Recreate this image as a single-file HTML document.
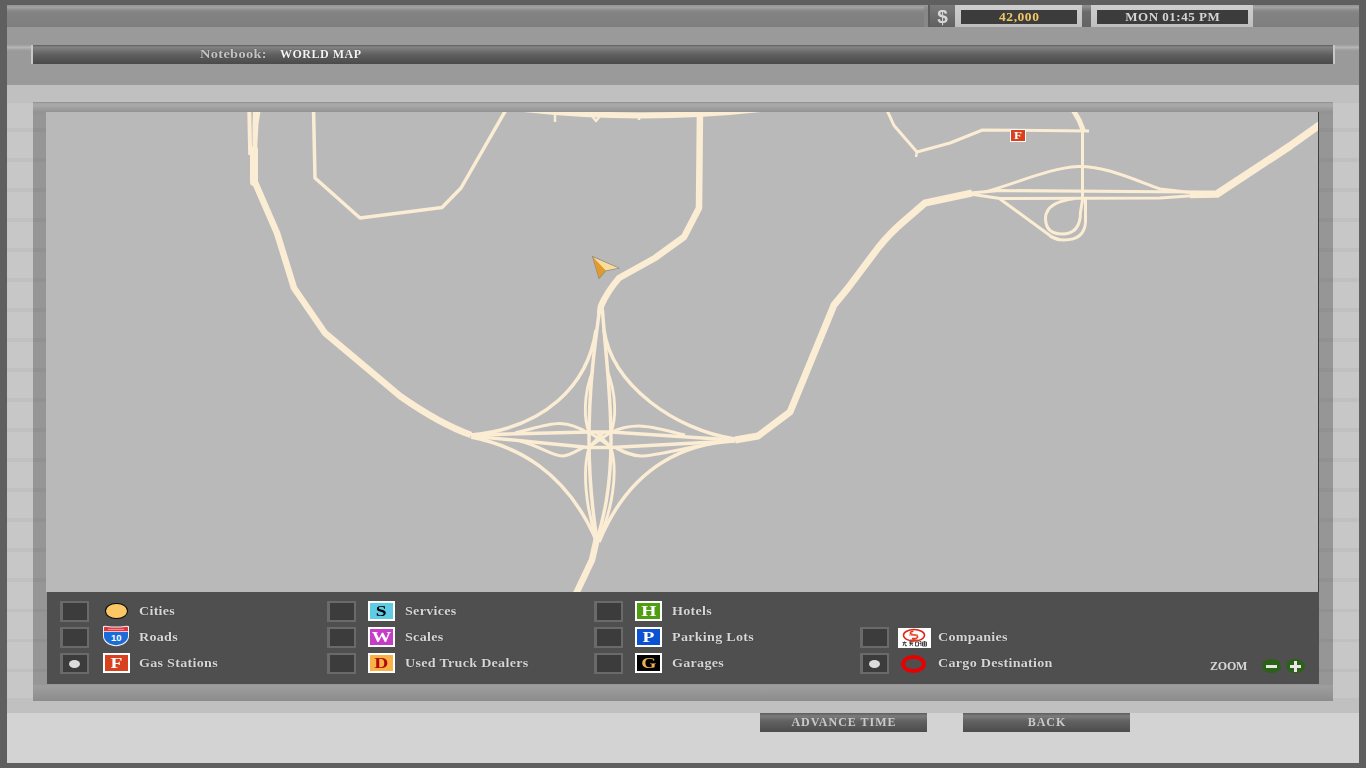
<!DOCTYPE html>
<html><head><meta charset="utf-8">
<style>
*{margin:0;padding:0;box-sizing:border-box}
html,body{width:1366px;height:768px;overflow:hidden;background:#5f5f5f;font-family:"Liberation Serif",serif;font-weight:bold}
.a{position:absolute}
#topbar{left:7px;top:5px;width:1352px;height:22px;background:linear-gradient(#959595 0,#a2a2a2 2.5px,#8a8a8a 5.5px,#828282 8px,#808080 20px,#7c7c7c 22px)}
#band{left:7px;top:27px;width:1352px;height:58px;background:#9a9a9a}
#light{left:7px;top:85px;width:1352px;height:628px;background:#c0c0c0}
.side{top:103px;width:26px;height:595px;background:#c7c7c7}
#stripes{left:7px;top:102px;width:1352px;height:596px;background:repeating-linear-gradient(180deg,rgba(0,0,0,0) 0,rgba(0,0,0,0) 26.5px,rgba(0,0,0,0.035) 26.5px,rgba(0,0,0,0.035) 30px)}
#bottom{left:7px;top:713px;width:1352px;height:50px;background:#d3d3d3}
#band2{left:7px;top:698px;width:1352px;height:15px;background:#c0c0c0}
#frame{left:33px;top:102px;width:1300px;height:599px;background:linear-gradient(#8c8c8c 0,#a5a5a5 1.5px,#a9a9a9 3.5px,#9c9c9c 7px,#939393 10px,#969696 14px,#969696 582px,#9e9e9e 584px,#8c8c8c 100%)}
#map{left:46px;top:112px;width:1272px;height:480px;background:#b9b9b9;overflow:hidden}
#mapline{left:1318px;top:112px;width:1px;height:480px;background:#404040}
#legend{left:47px;top:592px;width:1272px;height:92px;background:#4f4f4f}
.nbhl{top:45px;height:6px;background:linear-gradient(#a0a0a0 0,#b6b6b6 2.5px,#a2a2a2 4.5px,#9b9b9b 6px)}
#nb{left:33px;top:45px;width:1300px;height:19px;background:linear-gradient(#5c5c5c 0,#848484 2px,#7a7a7a 4px,#5e5e5e 10px,#4a4a4a 100%)}
.txt{white-space:nowrap;line-height:1;will-change:transform}
.cb{width:29px;height:21px;border:2px solid #6a6a6a;border-left-width:3px;border-bottom-width:2.5px;background:#3c3c3c}
.dot{left:6px;top:4.7px;width:11.2px;height:8.4px;border-radius:50%;background:#dcdcdc}
.lt{color:#d6d6d6;font-size:13px;letter-spacing:0.25px;text-shadow:0 0 1px #222;transform:scaleX(1.085);transform-origin:0 0}
.ic{width:27px;height:20px;border:2px solid #fff;border-left-width:2.5px;border-right-width:2.5px;font-size:15px;text-align:center;line-height:16.5px;font-weight:bold;will-change:transform}
.ic span{display:inline-block;transform:scaleX(1.3)}
.btn{top:713px;width:167px;height:19px;background:linear-gradient(#5c5c5c 0,#7c7c7c 3px,#626262 8px,#4c4c4c 100%);color:#cacaca;font-size:12px;text-align:center;line-height:19px;letter-spacing:1px;padding-left:1px}
</style></head><body>
<div class="a" id="topbar"></div>
<div class="a" id="band"></div>
<div class="a" id="light"></div>
<div class="a" id="band2"></div>
<div class="a" id="bottom"></div>

<!-- money / time -->
<div class="a" style="left:924px;top:5px;width:4px;height:22px;background:linear-gradient(#9a9a9a,#888 5px,#888)"></div>
<div class="a" style="left:928px;top:5px;width:2px;height:22px;background:#5c5c5c"></div>
<div class="a" style="left:930px;top:5px;width:25px;height:22px;background:linear-gradient(#7a7a7a,#606060);color:#d8d8d8;font-family:'Liberation Sans',sans-serif;font-size:19px;font-weight:bold;text-align:center;line-height:24px;will-change:transform">$</div>
<div class="a" style="left:955px;top:5px;width:127px;height:22px;background:linear-gradient(#cdcdcd,#c6c6c6 60%,#bebebe)"></div>
<div class="a txt" style="left:961px;top:10px;width:116px;height:14px;background:#3c3c3c;color:#f2c766;font-size:13.5px;text-align:center;line-height:14px;letter-spacing:0.55px;padding-left:0.55px">42,000</div>
<div class="a" style="left:1082px;top:5px;width:9px;height:22px;background:linear-gradient(#8e8e8e 0,#8a8a8a 2px,#6a6a6a 7px,#646464 100%)"></div>
<div class="a" style="left:1091px;top:5px;width:162px;height:22px;background:linear-gradient(#cdcdcd,#c6c6c6 60%,#bebebe)"></div>
<div class="a txt" style="left:1097px;top:10px;width:151px;height:14px;background:#3c3c3c;color:#d4d4d4;font-size:13px;text-align:center;line-height:14px;letter-spacing:0.5px;padding-left:0.5px">MON 01:45 PM</div>

<!-- notebook -->
<div class="a nbhl" style="left:7px;width:24px"></div>
<div class="a" style="left:31px;top:45px;width:2px;height:19px;background:#c8c8c8"></div>
<div class="a" id="nb"></div>
<div class="a" style="left:1333px;top:45px;width:2px;height:19px;background:#c8c8c8"></div>
<div class="a nbhl" style="left:1335px;width:24px"></div>
<div class="a txt" style="left:200px;top:48px;color:#c4c4c4;font-size:12.5px;letter-spacing:0.3px;transform:scaleX(1.15);transform-origin:0 0;text-shadow:0 0 1px #333">Notebook:</div>
<div class="a txt" style="left:280px;top:48px;color:#f4f4f4;font-size:12px;letter-spacing:0.5px;text-shadow:0 0 1px #333">WORLD MAP</div>

<div class="a side" style="left:7px"></div>
<div class="a side" style="left:1333px"></div>
<div class="a" id="frame"></div>
<div class="a" id="stripes"></div>
<div class="a" id="map">
<svg width="1272" height="480" viewBox="46 112 1272 480" style="display:block">
<g fill="none" stroke="#fbecd4" stroke-linejoin="round" stroke-linecap="butt">
<!-- road A -->
<path d="M249.2 108 L250.2 155" stroke-width="4"/>
<path d="M253 108 L261 108 L258.5 124 L257 152 L252.5 152 L252.5 124 Z" fill="#fbecd4" stroke="none"/>
<path d="M254 150 L254 182" stroke-width="8" stroke-linecap="round"/>
<path d="M254 180 L277 233 L294 288 L325 333 L400 396 Q440 424 471 435" stroke-width="6.5"/>
<!-- road B -->
<path d="M313.5 108 L315 178 L360 218 L442 207.5 L461 188 L507 108" stroke-width="3.5"/>
<!-- top arc -->
<path d="M515 108 Q640 123 770 108" stroke-width="6"/>
<path d="M555 114 L555 122 M639 114 L639 120 M592 116 L596 121 L600 116" stroke-width="2.5"/>
<!-- road C -->
<path d="M700 108 L699 208 L684 237 L655 258 L619 278 Q607 292 601 306 L600 314" stroke-width="6.5"/>
<!-- interchange verticals -->
<path d="M599.5 310 C594 350 589 390 589 440 C589 490 594 520 597 540" stroke-width="3.5"/>
<path d="M602.5 310 C605 350 611 390 611 440 C611 490 603 520 597 540" stroke-width="3.5"/>
<path d="M593 370 C583 395 584 420 589 432" stroke-width="2.9"/>
<path d="M607 370 C617 395 616 420 611 432" stroke-width="2.9"/>
<path d="M589 448 C582 470 586 510 597 540" stroke-width="2.9"/>
<path d="M611 448 C618 470 613 510 598 540" stroke-width="2.9"/>
<!-- X in center -->
<path d="M589 432 L611 447 M611 432 L589 447 M596 432 L611 447 M604 432 L589 447" stroke-width="2.9"/>
<!-- horizontals -->
<path d="M471 435 L589 432 L611 432 L733 440" stroke-width="3.5"/>
<path d="M471 436 L589 447.5 L611 447.5 L733 441" stroke-width="3.5"/>
<path d="M515 433 C535 428 550 423 560 423.5 C572 424 580 428 588 433" stroke-width="3.1"/>
<path d="M520 441 C540 446 552 456 562 456 C570 456 576 451 584 447" stroke-width="3.1"/>
<path d="M612 432 C620 428 628 426 639 426 C652 426 668 431 685 435" stroke-width="3.1"/>
<path d="M616 448 C624 452 632 456 641 456 C655 456 680 449 704 445" stroke-width="3.1"/>
<!-- ramps -->
<path d="M596 330 C588 385 545 428 471 435" stroke-width="3.5"/>
<path d="M604 330 C612 385 675 430 735 439" stroke-width="3.5"/>
<path d="M471 437 C516 446 566 470 597 542" stroke-width="3.5"/>
<path d="M735 441 C690 443 632 462 599 542" stroke-width="3.5"/>
<!-- bottom road -->
<path d="M597 538 L592 560 L574 598" stroke-width="6.5"/>
<!-- highway G -->
<path d="M735 440 L758 436 L790 412 L834 305 L848 288 L878 248 Q890 233 903 222 L925 203 L972 193" stroke-width="7"/>
<path d="M970 193 L1000 190.5 L1192 192 L1217 193" stroke-width="3"/>
<path d="M970 194 L1000 198.5 L1160 198 L1217 194" stroke-width="3"/>
<path d="M1190 194.5 L1217 194 L1290 146 L1325 121" stroke-width="7.5"/>
<path d="M985 192 C1020 182 1050 168 1078 166.5 C1105 166 1130 178 1160 189 L1195 193" stroke-width="3"/>
<path d="M1000 199 L1052 237 L1060 240" stroke-width="3"/>
<path d="M1082.5 131 L1082.5 200 L1080.5 212 Q1080.5 234 1062 234 Q1045.5 234 1045.5 218 Q1046 202 1075 198.5" stroke-width="3"/>
<path d="M1085.5 198 L1085.5 222 Q1084.5 240 1064 240 Q1056 240 1050 236" stroke-width="3"/>
<!-- road D -->
<path d="M886 108 L894 125.5 L917 152 L950 143 L982.5 130 L1089 131" stroke-width="3"/>
<path d="M917 151 L916 157" stroke-width="2.5"/>
<path d="M1072 108 L1079 120 L1083.5 131" stroke-width="5"/>
</g>
<!-- F icon -->
<rect x="1010" y="129" width="16" height="13" fill="#fff"/>
<rect x="1011" y="130" width="14" height="11" fill="#d8401e"/>
<text x="0" y="139.5" font-family="Liberation Serif" font-weight="bold" font-size="10" fill="#fff" text-anchor="middle" transform="translate(1018 0) scale(1.3 1)">F</text>
<!-- vehicle arrow -->
<g>
<path d="M592.8 256.9 L618.1 268.1 L605.6 270.6 L599.1 278.1 Z" fill="none" stroke="rgba(60,40,0,0.35)" stroke-width="1.2"/>
<path d="M592.8 256.9 L618.1 268.1 L605.6 270.6 Z" fill="#f9dc9c"/>
<path d="M592.8 256.9 L605.6 270.6 L599.1 278.1 Z" fill="#e29a2a"/>
</g>
</svg>

</div>
<div class="a" id="mapline"></div>
<div class="a" id="legend"></div>
<!-- checkboxes -->
<div class="a cb" style="left:60px;top:601px"></div>
<div class="a cb" style="left:60px;top:627px"></div>
<div class="a cb" style="left:60px;top:653px"><div class="a dot"></div></div>
<div class="a cb" style="left:327px;top:601px"></div>
<div class="a cb" style="left:327px;top:627px"></div>
<div class="a cb" style="left:327px;top:653px"></div>
<div class="a cb" style="left:594px;top:601px"></div>
<div class="a cb" style="left:594px;top:627px"></div>
<div class="a cb" style="left:594px;top:653px"></div>
<div class="a cb" style="left:860px;top:627px"></div>
<div class="a cb" style="left:860px;top:653px"><div class="a dot"></div></div>
<!-- icons -->
<div class="a" style="left:105px;top:602.8px;width:23px;height:16.6px;border-radius:50%;background:#fcc866;border:1.4px solid #080808"></div>
<svg class="a" style="left:102px;top:625px" width="28" height="22" viewBox="0 0 28 22">
<path d="M1 1.2 Q3 0.4 5 1 Q14 2.2 23 1 Q25 0.4 27 1.2 L27 11 C27 17 21 20.8 14 21.3 C7 20.8 1 17 1 11 Z" fill="#f4f4f4"/>
<path d="M2 2.2 Q3.5 1.6 5 2 Q14 3.2 23 2 Q24.5 1.6 26 2.2 L26 6.3 L2 6.3 Z" fill="#e23440"/>
<path d="M2 7 L26 7 L26 11 C26 16.3 20.5 19.6 14 20.2 C7.5 19.6 2 16.3 2 11 Z" fill="#1b6cd8"/>
<path d="M6 4.4 L22 4.4" stroke="#f3a0a8" stroke-width="0.9"/>
<text x="14.2" y="16.3" text-anchor="middle" font-family="Liberation Sans" font-weight="bold" font-size="9.5" fill="#fff">10</text>
</svg>
<div class="a ic" style="left:103px;top:653px;background:#d8401e;color:#fff"><span>F</span></div>
<div class="a ic" style="left:368px;top:601px;background:#5fcbe4;color:#000"><span>S</span></div>
<div class="a ic" style="left:368px;top:627px;background:#c63cc6;color:#fff"><span>W</span></div>
<div class="a ic" style="left:368px;top:653px;background:#f8b248;color:#b00a0a"><span>D</span></div>
<div class="a ic" style="left:635px;top:601px;background:#4f9e12;color:#fff"><span>H</span></div>
<div class="a ic" style="left:635px;top:627px;background:#0a52d2;color:#fff"><span>P</span></div>
<div class="a ic" style="left:635px;top:653px;background:#000;color:#e8b452"><span>G</span></div>
<svg class="a" style="left:898px;top:628px" width="33" height="20" viewBox="0 0 33 20">
<rect width="33" height="20" fill="#fff"/>
<ellipse cx="16" cy="7.3" rx="10.5" ry="5.7" fill="none" stroke="#e02414" stroke-width="1.5"/>
<path d="M15.5 3.2 Q12 3.5 12.5 5.5 Q13.5 7 17 7 Q20 7.5 19.5 9.3 Q18.5 11 14 10.5 M12 12.2 L20 12.2" fill="none" stroke="#e03a20" stroke-width="1.6"/>
<path d="M11 7 L20 7" stroke="#f07050" stroke-width="1"/>
<g fill="none" stroke="#3a3a3a" stroke-width="0.9">
<path d="M4.5 14.5 L8.5 14.5 M6.5 13.5 L5 18 M6.8 15 L7.5 18 L9 17.5"/>
<path d="M11 14 L15.5 14 M11.5 15.5 L15 15.5 M13 13 L12 18 M13.5 16 L15 18"/>
<path d="M17.5 14 L17.5 18 L20.5 18 L20.5 14 Z M21.5 13.5 L23 13.5 L23 18 M21.5 15.5 L23 15.5"/>
<path d="M24.5 14 L28.5 14 L28.5 18 L24.5 18 Z M24.5 16 L28.5 16 M26.5 13 L26.5 18"/>
</g>
</svg>
<div class="a" style="left:901px;top:655px;width:25px;height:18px;border-radius:50%;border:4px solid #e80000"></div>
<!-- labels -->
<div class="a txt lt" style="left:139px;top:604px">Cities</div>
<div class="a txt lt" style="left:139px;top:630px">Roads</div>
<div class="a txt lt" style="left:139px;top:656px">Gas Stations</div>
<div class="a txt lt" style="left:405.3px;top:604px">Services</div>
<div class="a txt lt" style="left:405.3px;top:630px">Scales</div>
<div class="a txt lt" style="left:405.3px;top:656px">Used Truck Dealers</div>
<div class="a txt lt" style="left:672.3px;top:604px">Hotels</div>
<div class="a txt lt" style="left:672.3px;top:630px">Parking Lots</div>
<div class="a txt lt" style="left:672.3px;top:656px">Garages</div>
<div class="a txt lt" style="left:938.3px;top:630px">Companies</div>
<div class="a txt lt" style="left:938.3px;top:656px">Cargo Destination</div>
<!-- zoom -->
<div class="a txt" style="left:1209.5px;top:660px;color:#d8d8d8;font-size:12px;letter-spacing:-0.2px">ZOOM</div>
<div class="a" style="left:1262px;top:659px;width:18.5px;height:14px;border-radius:50%;background:#2b6218"></div>
<div class="a" style="left:1266px;top:665px;width:10.5px;height:2.5px;background:#e8e8e8"></div>
<div class="a" style="left:1286px;top:659px;width:18.5px;height:14px;border-radius:50%;background:#2b6218"></div>
<div class="a" style="left:1290px;top:665px;width:10.5px;height:2.5px;background:#e8e8e8"></div>
<div class="a" style="left:1294px;top:661px;width:2.5px;height:10.5px;background:#e8e8e8"></div>

<!-- buttons -->
<div class="a btn txt" style="left:760px">ADVANCE TIME</div>
<div class="a btn txt" style="left:963px">BACK</div>
</body></html>
